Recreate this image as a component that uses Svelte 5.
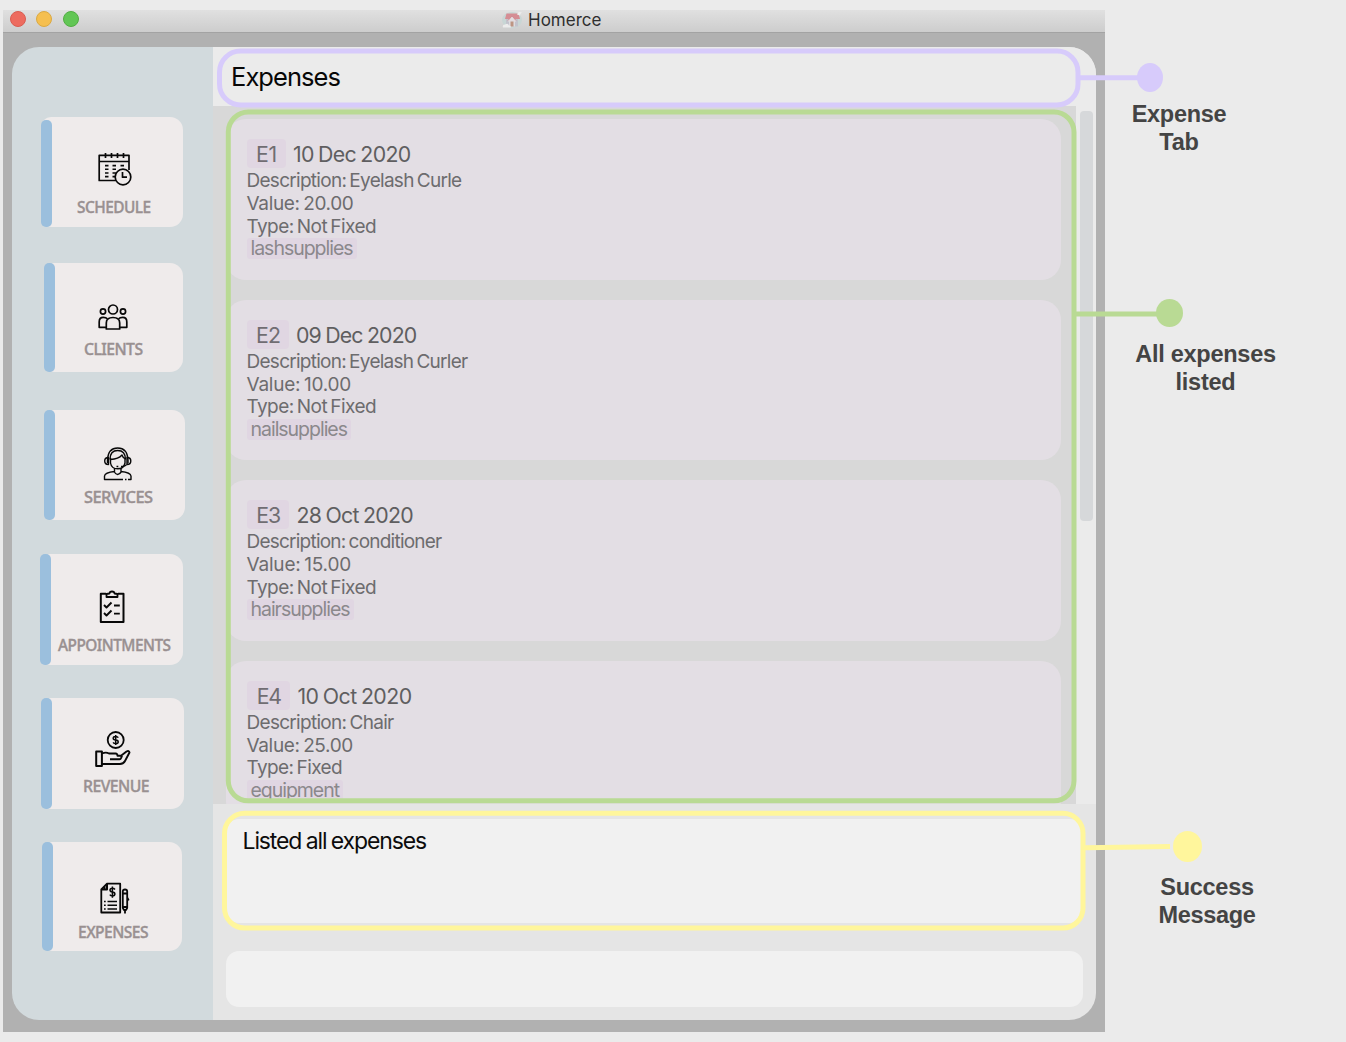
<script>
  const nav = [
    { id: 'schedule', label: 'SCHEDULE', gap: 70, x: 29, w: 141.5, h: 110, icon: [94, 149], labelX: 77, labelW: 73.5, base: 213.5, top: 117 },
    { id: 'clients', label: 'CLIENTS', gap: 36, x: 32, w: 139, h: 109, icon: [94, 298], labelX: 83.5, labelW: 58.5, base: 355.3, top: 263 },
    { id: 'services', label: 'SERVICES', gap: 38, x: 32, w: 141, h: 110, icon: [98, 443], labelX: 83.5, labelW: 68.5, base: 503, top: 410 },
    { id: 'appointments', label: 'APPOINTMENTS', gap: 34, x: 28, w: 143, h: 111, icon: [92, 587], labelX: 57.5, labelW: 112.5, base: 651, top: 554 },
    { id: 'revenue', label: 'REVENUE', gap: 32.5, x: 29, w: 143, h: 111.5, icon: [93, 729], labelX: 82.5, labelW: 66, base: 792.3, top: 697.5 },
    { id: 'expenses', label: 'EXPENSES', gap: 33, x: 30, w: 140, h: 109, icon: [95, 879], labelX: 77.5, labelW: 70, base: 938.5, top: 842 }
  ];

  const expenses = [
    { id: 'E1', idW: 22, boxW: 39, date: '10 Dec 2020', dateW: 117.5, desc: 'Eyelash Curle', descW: 215, value: '20.00', valueW: 107, type: 'Not Fixed', typeW: 129.5, tag: 'lashsupplies', tagW: 102 },
    { id: 'E2', idW: 25, boxW: 42, date: '09 Dec 2020', dateW: 120.5, desc: 'Eyelash Curler', descW: 221, value: '10.00', valueW: 104.5, type: 'Not Fixed', typeW: 129.5, tag: 'nailsupplies', tagW: 96.5 },
    { id: 'E3', idW: 25, boxW: 42.5, date: '28 Oct 2020', dateW: 116.5, desc: 'conditioner', descW: 195, value: '15.00', valueW: 104.5, type: 'Not Fixed', typeW: 129.5, tag: 'hairsupplies', tagW: 99 },
    { id: 'E4', idW: 25, boxW: 43.5, date: '10 Oct 2020', dateW: 114, desc: 'Chair', descW: 147, value: '25.00', valueW: 106.5, type: 'Fixed', typeW: 95.5, tag: 'equipment', tagW: 88.5 }
  ];

  // Tracks a single line of text so that it fills the given width.
  function fit(node, width) {
    const natural = node.getBoundingClientRect().width;
    node.style.letterSpacing = `${(width - natural) / node.textContent.length}px`;
  }

  // Condenses a label horizontally to the given width.
  function condense(node, width) {
    node.style.transform = `scaleX(${width / node.getBoundingClientRect().width})`;
  }
</script>

<div class="page">
  <div class="window">
    <header class="titlebar">
      <div class="lights"><i class="red"></i><i class="amber"></i><i class="green"></i></div>
      <div class="title">
        <svg width="22" height="20" viewBox="0 0 22 20">
          <ellipse cx="11" cy="10" rx="10" ry="8" fill="#c8d6d5" />
          <rect x="5" y="8" width="12" height="8.500" fill="#c3c3cc" />
          <path d="M5.500 3.500h12l1.500 5.500H4z" fill="#d58d94" />
          <path d="M7 10.500l4-4.500 4 4.500v1H7z" fill="#e3dde0" />
          <path d="M7 10.500l4-4.500 4 4.500" fill="none" stroke="#cb8088" stroke-width="0.800" />
          <rect x="8" y="10.500" width="6" height="6" fill="#dfdce0" />
          <rect x="9.500" y="11.500" width="3" height="5" fill="#bd9583" />
          <path d="M2 17.500q-1-3 2-3 3-2 4 1 2 0 2 2z" fill="#ececec" />
          <path d="M16 4.500q1-3.500 5-2-2 1-2 3z" fill="#eee" />
        </svg>
        <span use:fit={73.5}>Homerce</span>
      </div>
    </header>

    <div class="body">
      <nav class="sidebar">
        {#each nav as n}
          <div class="tile" style="--gap:{n.gap}px; --x:{n.x}px; --w:{n.w}px; --h:{n.h}px; --bar:{n.id === 'schedule' ? 2.5 : 0}px">
            <div class="stripe"></div>
            <div class="tile-body" style="--ix:{n.icon[0] - n.x - 12}px; --iy:{n.icon[1] - n.top}px; --lx:{n.labelX - n.x - 12}px; --ly:{n.base - 14.5 - n.icon[1] - 40}px">
              <svg width="40" height="40" viewBox="0 0 40 40" fill="none" stroke="#080808" stroke-width="1.700" stroke-linejoin="round">
                {#if n.id === 'schedule'}
                  <path d="M22 31.500H5.200V6.300H35V21M5.200 12.500H35" />
                  <path d="M11.500 4v5M17.500 4v5M23.500 4v5M29.500 4v5" />
                  <path d="M11 16.600h3.500M18.500 16.600h3.500M26.500 16.600h3.500M11 20.300h3.500M18.500 20.300h3.500M11 24h3.500M18.500 24h3.500M11 27.600h3.500M18.500 27.600h2.500" stroke-width="1.600" />
                  <circle cx="29" cy="28" r="7.800" />
                  <path d="M28.500 23v5.200h4.500" />
                {:else if n.id === 'clients'}
                  <circle cx="19" cy="11.500" r="4.500" />
                  <circle cx="9" cy="13.500" r="2.600" />
                  <circle cx="29" cy="13.500" r="2.600" />
                  <path d="M12.300 31V25q0-5.500 6.700-5.500t6.700 5.500v6z" />
                  <path d="M12.300 29.300H5.200V24q0-4.600 4-4.600 3 0 4 1.300M25.700 29.300h7.100V24q0-4.600-4-4.600-3 0-4 1.300" />
                {:else if n.id === 'services'}
                  <g stroke-width="1.400">
                    <path d="M9.500 20v-3Q10 5 19.700 5T30 17v3M12 16.500Q12 7.500 19.700 7.500T27.500 16.500" />
                    <path d="M10.500 14.500Q6.700 14.500 6.700 18t3.800 3.500zM29 14.500q3.800 0 3.800 3.500T29 21.500z" />
                    <path d="M12.500 15v5q1 5.800 7.200 5.800T27 20v-5M12.500 16.500q8-.5 11.500-4.500 1 3 3 3.500" />
                    <path d="M28.500 21.500q-1 2-5.500 2M18.500 23.500h1.800" />
                    <path d="M16.500 25v3.500q-9.500 1-10 4.500v3.500H25M27 36.500h1.500M30 36.500h3V33q-.5-3.500-10-4.500V25M16 28.500q3.500 6 7.500 0" />
                  </g>
                {:else if n.id === 'appointments'}
                  <path d="M14 6.700H8.800v28.300h22.700V6.700H26" stroke-width="2" />
                  <path d="M14.500 10V7l3-.5q.2-2 2.500-2t2.500 2l3 .5v3z" stroke-width="1.800" />
                  <path d="M12 18l2.500 2.500 5-5M12 26l2.500 2.500 5-5M22 18.500h5.800M22 26.600h5.800" stroke-width="1.900" />
                {:else if n.id === 'revenue'}
                  <circle cx="22.700" cy="11" r="8" stroke-width="1.800" />
                  <path d="M25.300 8.700Q24.500 7.500 22.700 7.500 20.200 7.500 20.200 9.200t2.500 1.800 2.500 1.900q0 1.700-2.500 1.700-1.800 0-2.600-1.200M22.700 6v10" stroke-width="1.500" />
                  <path d="M3.200 22.500h5.700V37H3.200z" stroke-width="2" />
                  <path d="M9 24.500q4-1.700 7 0h6.500q2 .2 2 2.200h3.500l5.500-4.200q2.500-1.300 3 1l-4.500 8.500q-1.500 3-5 3H9M17 30.300h9.500q1.500 0 2.500-3.500M17 30.300h8" stroke-width="1.900" />
                {:else}
                  <path d="M12 4.700H25.200V33.500H6.300V10.500z" stroke-width="1.800" />
                  <path d="M12 5v5.500H7M9.500 7.500v2" stroke-width="2" />
                  <path d="M20 10.500Q19 9.300 17.400 9.300 15 9.300 15 11.100t2.400 2 2.500 2q0 1.800-2.500 1.800-1.700 0-2.600-1.300M17.400 7.500v11.200" stroke-width="1.500" />
                  <path d="M9 22.500h1.700M12.500 22.500h9.500M9 26.300h1.700M12.500 26.300h9.500M9 30h1.700M12.500 30h9.500" stroke-width="1.500" />
                  <path d="M27.800 12.500q0-2 2.200-2t2.200 2V29l-1.200 2h-2l-1.200-2zM27.800 14.500h4.400M27.800 28h4.400M30 31v3.500M32.200 18.500l1.500 3" stroke-width="1.800" />
                {/if}
              </svg>
              <span class="label"><span use:condense={n.labelW}>{n.label}</span></span>
            </div>
          </div>
        {/each}
      </nav>

      <main class="main">
        <h1><span use:fit={109}>Expenses</span></h1>
        <div class="scroller">
          <div class="list">
            {#each expenses as e}
              <article class="card">
                <div class="head">
                  <div class="id" style="--w:{e.boxW}px"><span use:fit={e.idW}>{e.id}</span></div>
                  <span class="date"><span use:fit={e.dateW}>{e.date}</span></span>
                </div>
                <p><span use:fit={e.descW}>Description: {e.desc}</span></p>
                <p><span use:fit={e.valueW}>Value: {e.value}</span></p>
                <p><span use:fit={e.typeW}>Type: {e.type}</span></p>
                <div class="tag"><span use:fit={e.tagW}>{e.tag}</span></div>
              </article>
            {/each}
          </div>
          <div class="track"><div class="thumb"></div></div>
        </div>
        <div class="bottom">
          <div class="result"><span use:fit={183.5}>Listed all expenses</span></div>
          <div class="command"></div>
        </div>
      </main>
    </div>
  </div>

  <svg class="callouts" width="1346" height="1042" viewBox="0 0 1346 1042" fill="none" stroke-width="5">
    <g stroke="#d7cbfb">
      <rect x="219.500" y="51" width="858.500" height="54" rx="21" />
      <path d="M1080 77.800h60" />
      <ellipse cx="1150" cy="77.500" rx="13" ry="14.500" fill="#d7cbfb" stroke="none" />
    </g>
    <g stroke="#b9da94">
      <rect x="228.300" y="112" width="845.700" height="688.800" rx="20" />
      <path d="M1076 313.900h86" />
      <ellipse cx="1169.500" cy="313" rx="13.500" ry="14" fill="#b9da94" stroke="none" />
    </g>
    <g stroke="#fff69c">
      <rect x="224.500" y="813.300" width="858.500" height="114.700" rx="20" />
      <path d="M1085 847.800L1170 846.500" />
      <ellipse cx="1187.500" cy="846.500" rx="14.500" ry="15.500" fill="#fff69c" stroke="none" />
    </g>
  </svg>
  <div class="note tab"><span use:fit={94.5}>Expense</span><br /><span use:fit={39.5}>Tab</span></div>
  <div class="note all"><span use:fit={140.5}>All expenses</span><br /><span use:fit={60}>listed</span></div>
  <div class="note success"><span use:fit={93.5}>Success</span><br /><span use:fit={97}>Message</span></div>
</div>

<style>
  :global(body) { background: #ebebeb; }
  .page {
    position: relative;
    width: 1346px;
    height: 1042px;
    box-sizing: border-box;
    padding: 10px 0 0 3px;
    overflow: hidden;
    background: #ebebeb;
    font-family: Inter, "Liberation Sans", sans-serif;
    white-space: nowrap;
  }
  .window { width: 1102px; height: 1022px; background: #b1b1b1; }
  .titlebar {
    display: flex;
    box-sizing: border-box;
    height: 23px;
    border-bottom: 1px solid #a3a3a3;
    background: linear-gradient(#e0e0e0, #cdcdcd);
  }
  .lights { display: flex; gap: 10.700px; width: 498px; padding: 1px 0 0 6.500px; box-sizing: border-box; }
  .lights i { width: 16px; height: 16px; border-radius: 50%; box-sizing: border-box; }
  .red { background: #ed6b5f; border: 1px solid #d95c51; }
  .amber { background: #f5bf50; border: 1px solid #dba942; }
  .green { background: #62c655; border: 1px solid #52ad43; }
  .title { display: flex; gap: 5px; font-size: 17px; line-height: 20px; color: #2f2f2f; }
  .body {
    display: flex;
    width: 1084px;
    height: 973px;
    margin: 14px 0 0 9px;
    border-radius: 27px;
    overflow: hidden;
  }
  .sidebar { width: 201px; background: #d2dadd; }
  .tile {
    display: flex;
    width: var(--w);
    height: var(--h);
    margin: var(--gap) 0 0 var(--x);
    border-radius: 10px 13px 13px 10px;
    background: #efebeb;
  }
  .stripe { width: 10.500px; margin: var(--bar) -10.500px 0 0; border-radius: 5px; background: #9bbfdd; }
  .tile-body { padding: var(--iy) 0 0 var(--ix); }
  .tile-body svg { display: block; }
  .label {
    display: block;
    margin: var(--ly) 0 0 calc(var(--lx) - var(--ix));
    font: 500 17px/16px "Noto Sans", sans-serif;
    letter-spacing: -0.600px;
    color: #999091;
    -webkit-text-stroke: 0.400px #999091;
  }
  .label span { display: inline-block; transform-origin: 0 50%; }
  .main { display: flex; flex-direction: column; width: 883px; background: #e5e5e5; }
  h1 {
    box-sizing: border-box;
    height: 59px;
    margin: 0;
    padding-left: 18px;
    background: #ebebeb;
    color: #070707;
    font-size: 25.500px;
    font-weight: 400;
    line-height: 59px;
  }
  .scroller { display: flex; height: 698px; overflow: hidden; }
  .list {
    display: flex;
    flex-direction: column;
    gap: 20.200px;
    box-sizing: border-box;
    width: 863px;
    padding: 13.400px 15px 0 13px;
    background: #d8d8d8;
  }
  .card {
    flex: none;
    box-sizing: border-box;
    height: 160.300px;
    padding: 20px 0 0 20.500px;
    border-radius: 20px;
    background: #e3dee4;
    color: #6d6c6e;
  }
  .head { display: flex; height: 31px; color: #5f5e60; font-size: 21.300px; line-height: 31px; word-spacing: -1px; }
  .id {
    width: var(--w);
    height: 29px;
    margin-right: 7.500px;
    border-radius: 4px;
    background: #e0d6e2;
    color: #706d72;
    text-align: center;
  }
  .id span { padding-left: 1px; }
  p { height: 22.700px; margin: 0; font-size: 19px; line-height: 22.700px; word-spacing: -1.500px; }
  .tag {
    width: fit-content;
    height: 21px;
    padding: 0 4px;
    border-radius: 3px;
    background: #e0d6e2;
    color: #8b888c;
    font-size: 19.500px;
    line-height: 21px;
  }
  .track { width: 20px; padding: 5px 0 0 4px; box-sizing: border-box; background: #ebebeb; }
  .thumb { width: 13px; height: 410px; border-radius: 4px; background: #d6d8da; }
  .bottom { padding: 15px 13px 0; }
  .result {
    box-sizing: border-box;
    height: 104px;
    padding: 5px 0 0 16.500px;
    border-radius: 13px;
    background: #f1f1f1;
    color: #0c0c0c;
    font-size: 23px;
    line-height: 34px;
    word-spacing: -1px;
  }
  .command { height: 56px; margin-top: 28px; border-radius: 13px; background: #f1f1f1; }
  .callouts { position: absolute; inset: 0; }
  .note {
    position: absolute;
    width: 180px;
    color: #444;
    text-align: center;
    font: bold 23.500px/28px "Liberation Sans", sans-serif;
  }
  .tab { left: 1089px; top: 100px; }
  .all { left: 1115.500px; top: 340px; }
  .success { left: 1117px; top: 873px; }
</style>
